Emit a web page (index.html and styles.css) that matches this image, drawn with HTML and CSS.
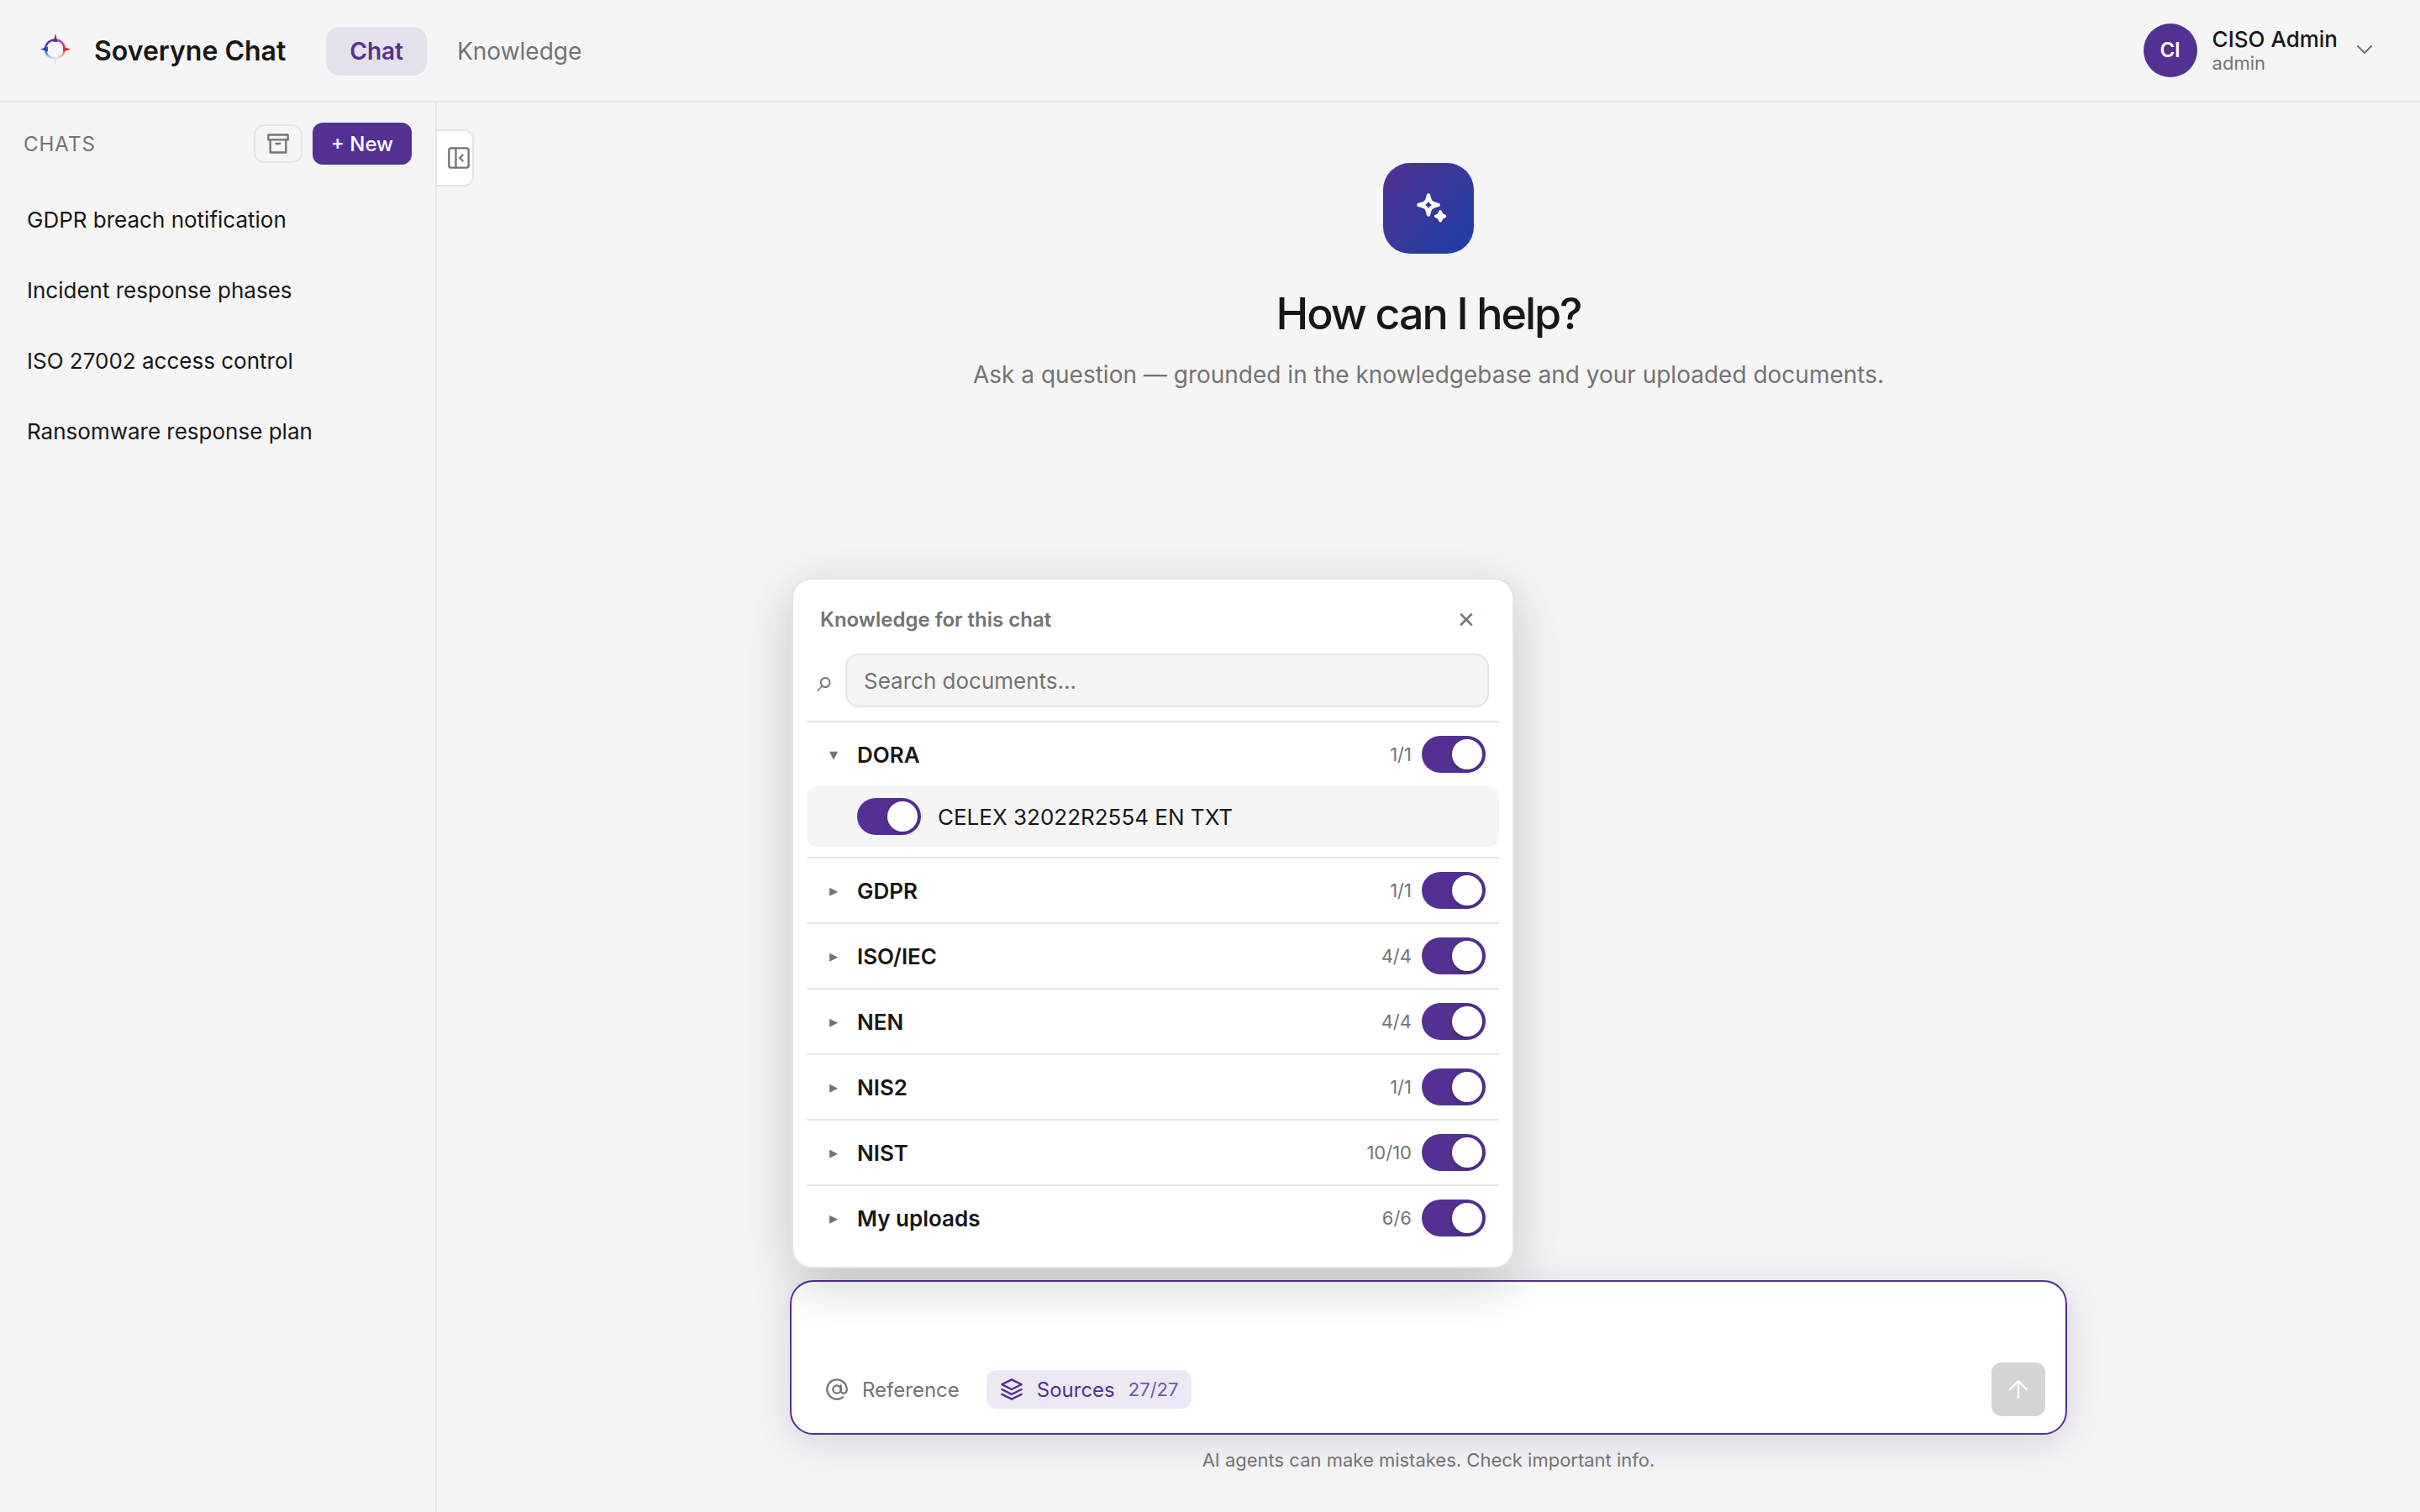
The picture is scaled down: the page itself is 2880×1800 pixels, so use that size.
FILE: index.html
```html
<!DOCTYPE html>
<html lang="en">
<head>
<meta charset="UTF-8">
<meta name="viewport" content="width=device-width, initial-scale=1.0">
<title>Soveryne Chat</title>
<link rel="stylesheet" href="styles.css">
</head>
<body>

<header class="topbar">
    <div class="brand">
        <svg class="brand-logo" viewBox="0 0 36 52" aria-hidden="true">
            <defs>
                <linearGradient id="ringLeft" x1="0" y1="0" x2="0" y2="1">
                    <stop offset="0" stop-color="#5b2d91"/>
                    <stop offset="0.6" stop-color="#2f62c9"/>
                    <stop offset="1" stop-color="#d5e2f8"/>
                </linearGradient>
                <linearGradient id="ringRight" x1="0" y1="0" x2="0" y2="1">
                    <stop offset="0" stop-color="#b03bd0"/>
                    <stop offset="0.5" stop-color="#e03a5a"/>
                    <stop offset="1" stop-color="#f6d5d0"/>
                </linearGradient>
            </defs>
            <path d="M17 13.500A11 11 0 0 0 17 35.500" fill="none" stroke="url(#ringLeft)" stroke-width="2.500"/>
            <path d="M19 13.500A11 11 0 0 1 21 35" fill="none" stroke="url(#ringRight)" stroke-width="2.500"/>
            <path d="M18 6L20.500 16H15.500Z" fill="#6b2f8f"/>
            <path d="M0 24.500L9 21.500V27.500Z" fill="#2253b8"/>
            <path d="M36 24.500L27 21.500V27.500Z" fill="#d8322f"/>
            <path d="M18 43L16 34H20Z" fill="#dbe6fa"/>
        </svg>
        <span class="brand-name">Soveryne Chat</span>
    </div>
    <nav class="tabs">
        <a class="tab tab-active" href="#">Chat</a>
        <a class="tab" href="#">Knowledge</a>
    </nav>
    <button class="account" type="button">
        <span class="avatar">CI</span>
        <span class="account-text">
            <span class="account-name">CISO Admin</span>
            <span class="account-role">admin</span>
        </span>
        <svg class="account-chevron" viewBox="0 0 24 24" aria-hidden="true"><path d="M4 7L12 15L20 7"/></svg>
    </button>
</header>

<div class="layout">
    <aside class="sidebar">
        <div class="sidebar-head">
            <h2 class="sidebar-title">CHATS</h2>
            <button class="archive-btn" type="button" aria-label="Archived chats">
                <svg class="icon" viewBox="0 0 24 24" aria-hidden="true"><path d="M2 3H22V8H2ZM4 8V21H20V8M10 12H14"/></svg>
            </button>
            <button class="new-btn" type="button">+ New</button>
        </div>
        <ul class="chat-list">
            <li><a class="chat-link" href="#">GDPR breach notification</a></li>
            <li><a class="chat-link" href="#">Incident response phases</a></li>
            <li><a class="chat-link" href="#">ISO 27002 access control</a></li>
            <li><a class="chat-link" href="#">Ransomware response plan</a></li>
        </ul>
    </aside>

    <main class="main">
        <button class="collapse-btn" type="button" aria-label="Collapse sidebar">
            <svg class="icon" viewBox="0 0 24 24" aria-hidden="true"><rect x="2" y="2" width="20" height="20" rx="2"/><path d="M9 2V22M16 9L13 12L16 15"/></svg>
        </button>

        <section class="hero">
            <div class="hero-icon">
                <svg class="hero-spark" viewBox="0 0 24 24" aria-hidden="true">
                    <path class="spark-line" d="M12 3.500C12.900 8 13.700 8.900 18.300 9.800C13.700 10.700 12.900 11.600 12 16.100C11.100 11.600 10.300 10.700 5.700 9.800C10.300 8.900 11.100 8 12 3.500Z"/>
                    <path class="spark-fill" d="M19.700 14.200L20.700 16.100L22.600 17.100L20.700 18.100L19.700 20L18.700 18.100L16.800 17.100L18.700 16.100Z"/>
                </svg>
            </div>
            <h1 class="hero-title">How can I help?</h1>
            <p class="hero-text">Ask a question — grounded in the knowledgebase and your uploaded documents.</p>
        </section>

        <div class="dock">
            <form class="composer">
                <textarea class="composer-input" aria-label="Message"></textarea>
                <div class="composer-bar">
                    <button class="chip" type="button">
                        <svg class="icon" viewBox="0 0 24 24" aria-hidden="true"><circle cx="12" cy="12" r="4"/><path d="M16 8V13A3 3 0 0 0 22 13V12A10 10 0 1 0 18 20"/></svg>
                        Reference
                    </button>
                    <button class="chip chip-active" type="button">
                        <svg class="icon" viewBox="0 0 24 24" aria-hidden="true"><path d="M12 2L22 7L12 12L2 7ZM2 12L12 17L22 12M2 17L12 22L22 17"/></svg>
                        Sources
                        <span class="chip-count">27/27</span>
                    </button>
                    <button class="send-btn" type="button" aria-label="Send" disabled>
                        <svg class="icon" viewBox="0 0 24 24" aria-hidden="true"><path d="M12 20.500V3.500M3.500 12L12 3.500L20.500 12"/></svg>
                    </button>
                </div>
            </form>

            <section class="sources" aria-label="Knowledge sources">
                <div class="sources-head">
                    <h2 class="sources-title">Knowledge for this chat</h2>
                    <button class="close-btn" type="button" aria-label="Close">✕</button>
                </div>
                <div class="search">
                    <label class="search-icon" for="docSearch">⌕</label>
                    <input class="search-input" id="docSearch" type="text" placeholder="Search documents…">
                </div>
                <div class="group">
                    <div class="group-row">
                        <button class="group-toggle" type="button" aria-label="Collapse DORA">▾</button>
                        <label class="group-name" for="srcDora">DORA</label>
                        <span class="group-count">1/1</span>
                        <input class="switch" id="srcDora" type="checkbox" checked>
                    </div>
                    <div class="doc-row">
                        <input class="switch" id="docCelex" type="checkbox" checked>
                        <label class="doc-name" for="docCelex">CELEX 32022R2554 EN TXT</label>
                    </div>
                </div>
                <div class="group">
                    <div class="group-row">
                        <button class="group-toggle" type="button" aria-label="Expand GDPR">▸</button>
                        <label class="group-name" for="srcGdpr">GDPR</label>
                        <span class="group-count">1/1</span>
                        <input class="switch" id="srcGdpr" type="checkbox" checked>
                    </div>
                </div>
                <div class="group">
                    <div class="group-row">
                        <button class="group-toggle" type="button" aria-label="Expand ISO/IEC">▸</button>
                        <label class="group-name" for="srcIso">ISO/IEC</label>
                        <span class="group-count">4/4</span>
                        <input class="switch" id="srcIso" type="checkbox" checked>
                    </div>
                </div>
                <div class="group">
                    <div class="group-row">
                        <button class="group-toggle" type="button" aria-label="Expand NEN">▸</button>
                        <label class="group-name" for="srcNen">NEN</label>
                        <span class="group-count">4/4</span>
                        <input class="switch" id="srcNen" type="checkbox" checked>
                    </div>
                </div>
                <div class="group">
                    <div class="group-row">
                        <button class="group-toggle" type="button" aria-label="Expand NIS2">▸</button>
                        <label class="group-name" for="srcNis2">NIS2</label>
                        <span class="group-count">1/1</span>
                        <input class="switch" id="srcNis2" type="checkbox" checked>
                    </div>
                </div>
                <div class="group">
                    <div class="group-row">
                        <button class="group-toggle" type="button" aria-label="Expand NIST">▸</button>
                        <label class="group-name" for="srcNist">NIST</label>
                        <span class="group-count">10/10</span>
                        <input class="switch" id="srcNist" type="checkbox" checked>
                    </div>
                </div>
                <div class="group">
                    <div class="group-row">
                        <button class="group-toggle" type="button" aria-label="Expand My uploads">▸</button>
                        <label class="group-name" for="srcUploads">My uploads</label>
                        <span class="group-count">6/6</span>
                        <input class="switch" id="srcUploads" type="checkbox" checked>
                    </div>
                </div>
            </section>
            <p class="note">AI agents can make mistakes. Check important info.</p>
        </div>
    </main>
</div>

</body>
</html>
```
FILE: styles.css
```css
* {
    box-sizing: border-box;
}

body {
    margin: 0;
    min-height: 100vh;
    display: flex;
    flex-direction: column;
    background: #f5f5f5;
    color: #171717;
    font-family: Inter, "DejaVu Sans", sans-serif;
    font-size: 26px;
}

button,
input,
textarea {
    font: inherit;
    color: inherit;
}

button {
    border: 0;
    padding: 0;
    background: none;
    cursor: pointer;
}

h1,
h2,
p,
ul {
    margin: 0;
    padding: 0;
    font-weight: 400;
}

a {
    color: inherit;
    text-decoration: none;
}

.icon {
    width: 28px;
    height: 28px;
    fill: none;
    stroke: currentColor;
    stroke-width: 2;
    stroke-linecap: round;
    stroke-linejoin: round;
}

/* top bar */
.topbar {
    display: flex;
    align-items: center;
    height: 122px;
    padding: 0 54px 0 48px;
    border-bottom: 2px solid #e5e5e5;
}

.brand {
    display: flex;
    align-items: center;
    gap: 28px;
}

.brand-logo {
    width: 36px;
    height: 52px;
}

.brand-name {
    font-size: 32px;
    font-weight: 600;
}

.tabs {
    display: flex;
    gap: 8px;
    margin: 2px 0 0 48px;
}

.tab {
    padding: 0 28px;
    border-radius: 16px;
    font-size: 28px;
    line-height: 58px;
    color: #737373;
}

.tab-active {
    background: #e4e1ec;
    color: #523193;
    font-weight: 600;
}

.account {
    display: flex;
    align-items: center;
    margin-left: auto;
    text-align: left;
}

.avatar {
    width: 64px;
    height: 64px;
    margin-right: 18px;
    border-radius: 50%;
    background: #523193;
    color: #fff;
    font-size: 24px;
    font-weight: 600;
    line-height: 64px;
    text-align: center;
}

.account-text {
    display: flex;
    flex-direction: column;
}

.account-name {
    font-weight: 500;
    line-height: 30px;
}

.account-role {
    font-size: 22px;
    line-height: 26px;
    color: #737373;
}

.account-chevron {
    width: 24px;
    height: 24px;
    margin-left: 20px;
    fill: none;
    stroke: #737373;
    stroke-width: 2;
    stroke-linecap: round;
    stroke-linejoin: round;
}

/* sidebar */
.layout {
    flex: 1;
    display: flex;
}

.sidebar {
    width: 520px;
    flex-shrink: 0;
    border-right: 2px solid #e5e5e5;
}

.sidebar-head {
    display: flex;
    align-items: center;
    gap: 12px;
    padding: 24px 28px;
}

.sidebar-title {
    flex: 1;
    font-size: 24px;
    letter-spacing: 1px;
    color: #737373;
}

.archive-btn {
    display: flex;
    align-items: center;
    justify-content: center;
    width: 58px;
    height: 46px;
    border: 2px solid #e5e5e5;
    border-radius: 12px;
    color: #737373;
}

.new-btn {
    height: 50px;
    padding: 0 22px;
    border-radius: 12px;
    background: #523193;
    color: #fff;
    font-size: 24px;
    font-weight: 500;
}

.chat-list {
    list-style: none;
}

.chat-link {
    display: block;
    padding: 0 32px;
    line-height: 84px;
}

/* main column */
.main {
    position: relative;
    flex: 1;
    display: flex;
    flex-direction: column;
    align-items: center;
    padding: 72px 0 46px;
}

.collapse-btn {
    position: absolute;
    top: 32px;
    left: 0;
    display: flex;
    align-items: center;
    justify-content: flex-end;
    width: 44px;
    height: 68px;
    padding-right: 2px;
    border: 2px solid #e5e5e5;
    border-left: 0;
    border-radius: 0 12px 12px 0;
    background: #fff;
    color: #737373;
}

.hero {
    display: flex;
    flex-direction: column;
    align-items: center;
}

.hero-icon {
    display: flex;
    align-items: center;
    justify-content: center;
    width: 108px;
    height: 108px;
    border-radius: 32px;
    background: linear-gradient(135deg, #523193, #1c3fa5);
}

.hero-spark {
    width: 44px;
    height: 44px;
}

.spark-line {
    fill: none;
    stroke: #fff;
    stroke-width: 2.4;
    stroke-linejoin: round;
}

.spark-fill {
    fill: #fff;
    stroke: #fff;
    stroke-width: 2;
    stroke-linejoin: round;
}

.hero-title {
    margin-top: 36px;
    font-size: 52px;
    font-weight: 500;
    letter-spacing: -0.04em;
    line-height: 72px;
}

.hero-text {
    margin-top: 14px;
    font-size: 28px;
    line-height: 44px;
    color: #737373;
}

/* composer */
.dock {
    position: relative;
    width: 1520px;
    max-width: 100%;
    margin-top: auto;
}

.composer {
    display: flex;
    flex-direction: column;
    padding: 20px 24px 20px 28px;
    border: 2px solid #523193;
    border-radius: 28px;
    background: #fff;
    box-shadow: 0 8px 48px rgba(82, 49, 147, 0.18);
}

.composer-input {
    height: 76px;
    border: 0;
    outline: 0;
    resize: none;
    background: none;
}

.composer-bar {
    display: flex;
    align-items: center;
    gap: 20px;
}

.chip {
    display: flex;
    align-items: center;
    gap: 16px;
    height: 46px;
    padding: 0 12px;
    border-radius: 12px;
    font-size: 24px;
    color: #737373;
}

.chip-active {
    padding: 0 16px;
    background: #ede9f4;
    color: #523193;
}

.chip-count {
    font-size: 22px;
    opacity: 0.8;
}

.send-btn {
    display: flex;
    align-items: center;
    justify-content: center;
    width: 64px;
    height: 64px;
    margin-left: auto;
    border-radius: 12px;
    background: #d4d4d4;
    color: #fff;
}

.note {
    margin-top: 14px;
    font-size: 22px;
    line-height: 32px;
    text-align: center;
    color: #737373;
}

/* sources popover */
.sources {
    position: absolute;
    bottom: 244px;
    left: 2px;
    width: 860px;
    padding: 16px 16px 20px;
    border: 2px solid #e5e5e5;
    border-radius: 24px;
    background: #fff;
    box-shadow: 0 16px 64px rgba(0, 0, 0, 0.2);
}

.sources-head {
    display: flex;
    align-items: center;
    justify-content: space-between;
    padding: 8px 16px;
}

.sources-title {
    font-size: 24px;
    font-weight: 600;
    color: #737373;
}

.close-btn {
    width: 46px;
    height: 46px;
    font-size: 26px;
    color: #737373;
}

.search {
    display: flex;
    align-items: center;
    gap: 14px;
    padding: 10px 12px 16px;
}

.search-icon {
    font-size: 36px;
    line-height: 36px;
    color: #737373;
}

.search-input {
    flex: 1;
    height: 64px;
    padding: 0 20px;
    border: 2px solid #e5e5e5;
    border-radius: 16px;
    background: #f5f5f5;
}

.search-input::placeholder {
    color: #737373;
}

.group {
    border-top: 2px solid #e5e5e5;
}

.group-row {
    display: flex;
    align-items: center;
    gap: 12px;
    height: 76px;
    padding: 0 16px;
}

.group-toggle {
    width: 32px;
    font-size: 20px;
    color: #737373;
}

.group-name {
    flex: 1;
    font-weight: 600;
}

.group-count {
    font-size: 22px;
    color: #737373;
}

.switch {
    appearance: none;
    display: flex;
    flex-shrink: 0;
    justify-content: flex-end;
    width: 76px;
    height: 44px;
    margin: 0;
    padding: 4px;
    border-radius: 22px;
    background: #523193;
}

.switch::before {
    content: "";
    width: 36px;
    height: 36px;
    border-radius: 50%;
    background: #fff;
    box-shadow: 0 2px 6px rgba(0, 0, 0, 0.2);
}

.doc-row {
    display: flex;
    align-items: center;
    gap: 20px;
    height: 72px;
    margin-bottom: 12px;
    padding-left: 60px;
    border-radius: 12px;
    background: #f5f5f5;
}

.doc-name {
    font-size: 26px;
}
```
